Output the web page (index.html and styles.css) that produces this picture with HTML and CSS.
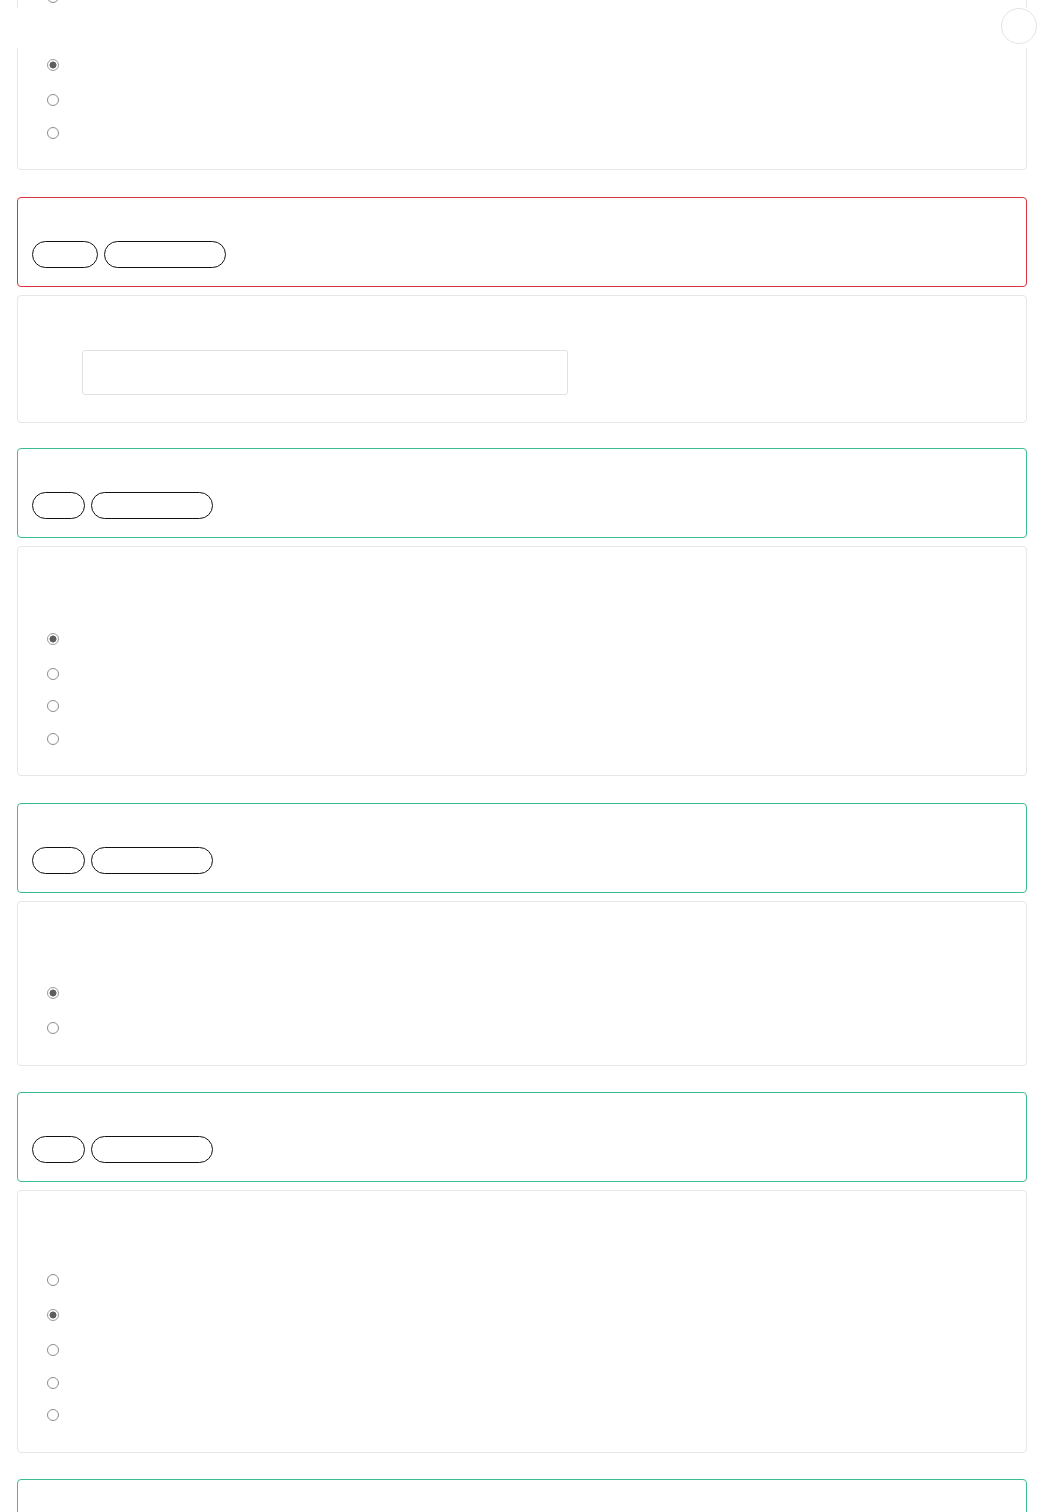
FILE: index.html
```html
<!DOCTYPE html>
<html lang="en">
<head>
<meta charset="utf-8">
<title>Quiz review</title>
<link rel="stylesheet" href="styles.css">
</head>
<body>
<header class="topbar">
  <button class="round-btn" type="button" aria-label="Menu"></button>
</header>
<main class="list">
  <section class="card question">
    <div class="q-title"></div>
    <div class="options">
      <label class="option"><input type="radio" name="q0" disabled></label>
      <label class="option"><input type="radio" name="q0" disabled></label>
      <label class="option is-checked"><input type="radio" name="q0" disabled checked></label>
      <label class="option"><input type="radio" name="q0" disabled></label>
      <label class="option"><input type="radio" name="q0" disabled></label>
    </div>
  </section>

  <section class="card result wrong">
    <div class="r-title"></div>
    <div class="pills"><span class="pill w66"></span><span class="pill w122"></span></div>
  </section>
  <section class="card question input-q">
    <div class="q-title short"></div>
    <div class="answer-box"></div>
  </section>

  <section class="card result right">
    <div class="r-title"></div>
    <div class="pills"><span class="pill w53"></span><span class="pill w122"></span></div>
  </section>
  <section class="card question">
    <div class="q-title"></div>
    <div class="options">
      <label class="option is-checked"><input type="radio" name="q2" disabled checked></label>
      <label class="option"><input type="radio" name="q2" disabled></label>
      <label class="option"><input type="radio" name="q2" disabled></label>
      <label class="option"><input type="radio" name="q2" disabled></label>
    </div>
  </section>

  <section class="card result right">
    <div class="r-title"></div>
    <div class="pills"><span class="pill w53"></span><span class="pill w122"></span></div>
  </section>
  <section class="card question">
    <div class="q-title"></div>
    <div class="options">
      <label class="option is-checked"><input type="radio" name="q3" disabled checked></label>
      <label class="option"><input type="radio" name="q3" disabled></label>
    </div>
  </section>

  <section class="card result right">
    <div class="r-title"></div>
    <div class="pills"><span class="pill w53"></span><span class="pill w122"></span></div>
  </section>
  <section class="card question">
    <div class="q-title"></div>
    <div class="options">
      <label class="option"><input type="radio" name="q4" disabled></label>
      <label class="option is-checked"><input type="radio" name="q4" disabled checked></label>
      <label class="option"><input type="radio" name="q4" disabled></label>
      <label class="option"><input type="radio" name="q4" disabled></label>
      <label class="option"><input type="radio" name="q4" disabled></label>
    </div>
  </section>

  <section class="card result right">
    <div class="r-title"></div>
    <div class="pills"><span class="pill w53"></span><span class="pill w122"></span></div>
  </section>
</main>
</body>
</html>
```

FILE: styles.css
```css
* { box-sizing: border-box; }

html, body {
  margin: 0;
  padding: 0;
  background: #ffffff;
  font-family: "Liberation Sans", Arial, sans-serif;
}

.topbar {
  position: fixed;
  top: 8px;
  left: 0;
  right: 0;
  height: 40px;
  background: #ffffff;
  display: flex;
  justify-content: flex-end;
  align-items: flex-start;
  padding-right: 7px;
  z-index: 10;
}

.round-btn {
  width: 36px;
  height: 36px;
  border-radius: 50%;
  border: 1px solid #e4e4e4;
  background: #ffffff;
  padding: 0;
}

.list {
  margin-top: -92.5px;
  padding: 0 17px;
  display: flex;
  flex-direction: column;
}

.card {
  border: 1px solid #e6e6e6;
  border-radius: 4px;
  background: #ffffff;
}

.question {
  padding: 20px 20px 20px;
  margin-bottom: 26.5px;
}

.q-title { height: 52.5px; }
.q-title.short { height: 34px; }

.options {
  display: flex;
  flex-direction: column;
}

.option {
  display: flex;
  align-items: center;
  height: 32.5px;
  padding-left: 9px;
}

.option.is-checked { height: 38px; }

.option input {
  -webkit-appearance: none;
  appearance: none;
  margin: 0;
  width: 12px;
  height: 12px;
  border: 1px solid #8c8c8c;
  border-radius: 50%;
  background: #ffffff;
}

.option input:checked {
  border-color: #9a9a9a;
  background: radial-gradient(circle, #5e5e5e 0, #5e5e5e 3.2px, #ffffff 3.8px);
}

.input-q {
  padding-bottom: 27px;
  margin-bottom: 25.5px;
}

.answer-box {
  margin-left: 44px;
  width: 486px;
  height: 45px;
  border: 1px solid #e2e2e2;
  border-radius: 3px;
}

.result {
  padding: 14px 14px 18px;
  margin-bottom: 8px;
}

.result.wrong { border-color: #dc3340; }
.result.right { border-color: #3dbd93; }

.r-title { height: 29px; }

.pills {
  display: flex;
  gap: 6px;
}

.pill {
  display: block;
  height: 27px;
  border: 1px solid #111111;
  border-radius: 14px;
}

.w53 { width: 53px; }
.w66 { width: 66px; }
.w122 { width: 122px; }
```
